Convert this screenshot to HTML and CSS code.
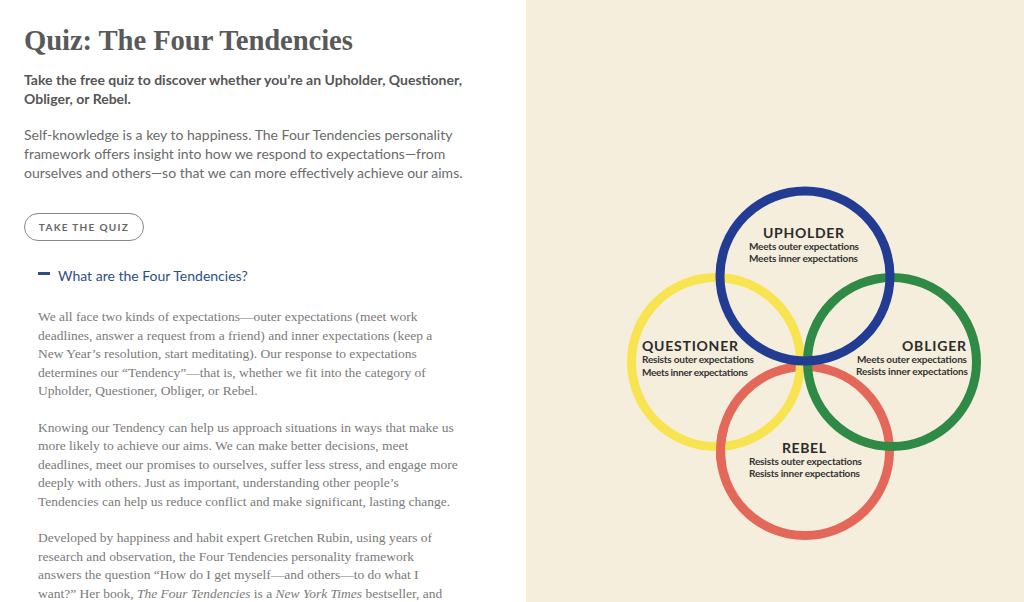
FILE: index.html
```html
<!DOCTYPE html>
<html lang="en">
<head>
<meta charset="utf-8">
<title>Quiz: The Four Tendencies</title>
<link rel="stylesheet" href="styles.css">
</head>
<body>
<div class="page">
  <main class="content">
    <h1 class="title">Quiz: The Four Tendencies</h1>
    <p class="lead">Take the free quiz to discover whether you’re an Upholder, Questioner, Obliger, or Rebel.</p>
    <p class="intro">Self-knowledge is a key to happiness. The Four Tendencies personality framework offers insight into how we respond to expectations—from ourselves and others—so that we can more effectively achieve our aims.</p>
    <a class="btn" href="#">TAKE THE QUIZ</a>
    <section class="accordion">
      <h2 class="acc-head"><span class="dash"></span>What are the Four Tendencies?</h2>
      <div class="acc-body">
        <p>We all face two kinds of expectations—outer expectations (meet work<br>deadlines, answer a request from a friend) and inner expectations (keep a<br>New Year’s resolution, start meditating). Our response to expectations<br>determines our “Tendency”—that is, whether we fit into the category of<br>Upholder, Questioner, Obliger, or Rebel.</p>
        <p>Knowing our Tendency can help us approach situations in ways that make us<br>more likely to achieve our aims. We can make better decisions, meet<br>deadlines, meet our promises to ourselves, suffer less stress, and engage more<br>deeply with others. Just as important, understanding other people’s<br>Tendencies can help us reduce conflict and make significant, lasting change.</p>
        <p>Developed by happiness and habit expert Gretchen Rubin, using years of<br>research and observation, the Four Tendencies personality framework<br>answers the question “How do I get myself—and others—to do what I<br>want?” Her book, <em>The Four Tendencies</em> is a <em>New York Times</em> bestseller, and</p>
      </div>
    </section>
  </main>
  <aside class="art">
    <svg class="diagram" width="498" height="602" viewBox="0 0 498 602" xmlns="http://www.w3.org/2000/svg">
      <g fill="none" stroke-width="9">
        <circle cx="279" cy="451" r="84.5" stroke="#e4685a"/>
        <circle cx="190" cy="362" r="84.5" stroke="#f8e350"/>
        <circle cx="366" cy="362" r="84.5" stroke="#2f8a45"/>
        <circle cx="279" cy="276" r="85" stroke="#233c93"/>
        <path d="M 197.8 427.7 A 84.5 84.5 0 0 0 195.8 465.7" stroke="#e4685a"/>
      </g>
      <g class="labels">
        <text class="name" x="237" y="238" textLength="81">UPHOLDER</text>
        <text class="sub" x="223" y="249.5" textLength="110">Meets outer expectations</text>
        <text class="sub" x="223" y="261.5" textLength="109">Meets inner expectations</text>

        <text class="name" x="116" y="351" textLength="96">QUESTIONER</text>
        <text class="sub" x="116" y="363" textLength="112">Resists outer expectations</text>
        <text class="sub" x="116" y="375.5" textLength="106">Meets inner expectations</text>

        <text class="name" x="376" y="350.5" textLength="64">OBLIGER</text>
        <text class="sub" x="331" y="362.5" textLength="110">Meets outer expectations</text>
        <text class="sub" x="330" y="374.5" textLength="112">Resists inner expectations</text>

        <text class="name" x="256" y="452.5" textLength="44">REBEL</text>
        <text class="sub" x="223" y="464.5" textLength="113">Resists outer expectations</text>
        <text class="sub" x="223" y="476.5" textLength="111">Resists inner expectations</text>
      </g>
    </svg>
  </aside>
</div>
</body>
</html>
```

FILE: styles.css
```css
html, body {
  margin: 0;
  padding: 0;
  background: #ffffff;
}
.page {
  display: grid;
  grid-template-columns: 526px 498px;
  height: 602px;
  overflow: hidden;
}
.content {
  padding: 22px 0 0 24px;
  overflow: hidden;
}
.title {
  margin: 0;
  font-family: "Liberation Serif", serif;
  font-weight: 700;
  font-size: 28.7px;
  line-height: 36px;
  color: #595959;
  letter-spacing: -0.1px;
}
.lead {
  margin: 12px 0 0;
  width: 440px;
  font-family: "Lato", sans-serif;
  font-weight: 700;
  font-size: 14px;
  line-height: 19px;
  color: #555;
}
.intro {
  margin: 17px 0 0;
  width: 440px;
  font-family: "Lato", sans-serif;
  font-size: 14px;
  line-height: 19px;
  color: #6a6a6a;
}
.btn {
  display: inline-flex;
  align-items: center;
  justify-content: center;
  box-sizing: border-box;
  margin-top: 31px;
  width: 120px;
  height: 28px;
  border: 1px solid #888;
  border-radius: 14px;
  font-family: "Lato", sans-serif;
  font-size: 10px;
  font-weight: 700;
  letter-spacing: 1.3px;
  color: #666;
  text-decoration: none;
}
.accordion {
  padding-left: 14px;
  margin-top: 25px;
}
.acc-head {
  margin: 0;
  display: flex;
  align-items: center;
  font-family: "Lato", sans-serif;
  font-weight: 400;
  font-size: 14px;
  line-height: 20px;
  color: #2e4f84;
}
.dash {
  width: 12px;
  height: 3px;
  background: #2e4f84;
  margin-right: 8px;
  margin-top: -6px;
}
.acc-body {
  margin-top: 22px;
}
.acc-body p {
  margin: 0 0 18px;
  white-space: nowrap;
  font-family: "Liberation Serif", serif;
  font-size: 13.5px;
  line-height: 18.5px;
  color: #7a7a7a;
}
.art {
  background: #f6eedd;
  overflow: hidden;
}
.diagram {
  display: block;
}
.labels text {
  font-family: "Lato", sans-serif;
  fill: #2b2b2b;
}
.labels .name {
  font-size: 14px;
  font-weight: 700;
}
.labels .sub {
  font-size: 10px;
  font-weight: 700;
  fill: #333;
}
```
